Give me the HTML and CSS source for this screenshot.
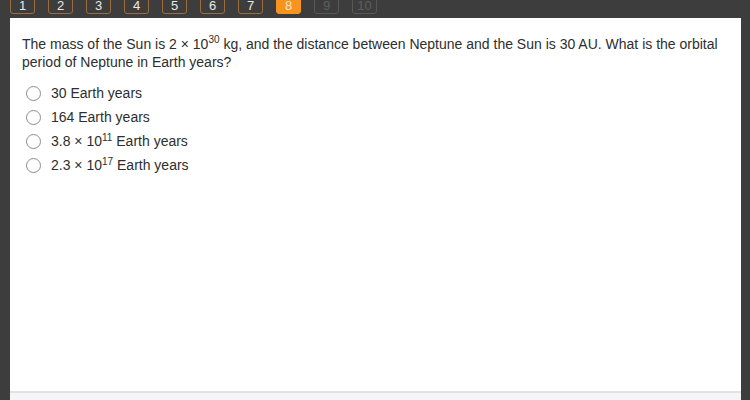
FILE: index.html
```html
<!DOCTYPE html>
<html lang="en">

<head>
    <meta charset="UTF-8">
    <meta name="viewport" content="width=device-width, initial-scale=1.0">
    <title>Question 8</title>
    <link rel="stylesheet" href="styles.css">
</head>

<body>
    <div class="pager">
        <button class="page done">1</button>
        <button class="page done">2</button>
        <button class="page done">3</button>
        <button class="page done">4</button>
        <button class="page done">5</button>
        <button class="page done">6</button>
        <button class="page done">7</button>
        <button class="page current">8</button>
        <button class="page locked">9</button>
        <button class="page locked">10</button>
    </div>
    <div class="panel">
        <p class="question">The mass of the Sun is 2 &times; 10<sup>30</sup> kg, and the distance between Neptune and the Sun is 30 AU. What is the orbital period of Neptune in Earth years?</p>
        <form class="answers">
            <label class="answer"><input type="radio" name="answer"><span>30 Earth years</span></label>
            <label class="answer"><input type="radio" name="answer"><span>164 Earth years</span></label>
            <label class="answer"><input type="radio" name="answer"><span>3.8 &times; 10<sup>11</sup> Earth years</span></label>
            <label class="answer"><input type="radio" name="answer"><span>2.3 &times; 10<sup>17</sup> Earth years</span></label>
        </form>
        <div class="footer"></div>
    </div>
</body>

</html>
```

FILE: styles.css
```css
body {
    margin: 0;
    padding: 0;
    height: 400px;
    overflow: hidden;
    background-color: #3d3d3d;
    font-family: 'Liberation Sans', Arial, sans-serif;
    display: flex;
    flex-direction: column;
}

.pager {
    display: flex;
    gap: 13px;
    padding-left: 10px;
    height: 18px;
    align-items: flex-end;
}

.page {
    width: 25px;
    height: 22px;
    margin-bottom: 4px;
    padding: 4px 0 0;
    border: 1px solid #9c6c3c;
    border-radius: 3px;
    background: transparent;
    color: #e8e8e8;
    font-family: inherit;
    font-size: 13px;
    line-height: 13px;
    box-sizing: border-box;
}

.page.current {
    background-color: #f7941d;
    border-color: #f7941d;
    color: #fde3c4;
}

.page.locked {
    border-color: #575757;
    color: #5e5e5e;
}

.panel {
    flex: 1;
    margin: 0 9px 0 10px;
    background-color: #ffffff;
    display: flex;
    flex-direction: column;
}

.question {
    margin: 17px 12px 0 12px;
    font-size: 14px;
    line-height: 18px;
    color: #2e2e2e;
}

sup {
    font-size: 10px;
    line-height: 10px;
    vertical-align: top;
}

.answers {
    margin: 13px 0 0 16px;
    display: flex;
    flex-direction: column;
    gap: 6px;
}

.answer {
    display: flex;
    align-items: center;
    gap: 10px;
    height: 18px;
    font-size: 14px;
    color: #2e2e2e;
}

.answer input {
    appearance: none;
    width: 15px;
    height: 15px;
    margin: 0;
    border: 1.5px solid #8c8c8c;
    border-radius: 50%;
    background: #ffffff;
}

.footer {
    margin-top: auto;
    height: 7px;
    border-top: 2px solid #e2e2e2;
    background-color: #f5f5f7;
}
```
